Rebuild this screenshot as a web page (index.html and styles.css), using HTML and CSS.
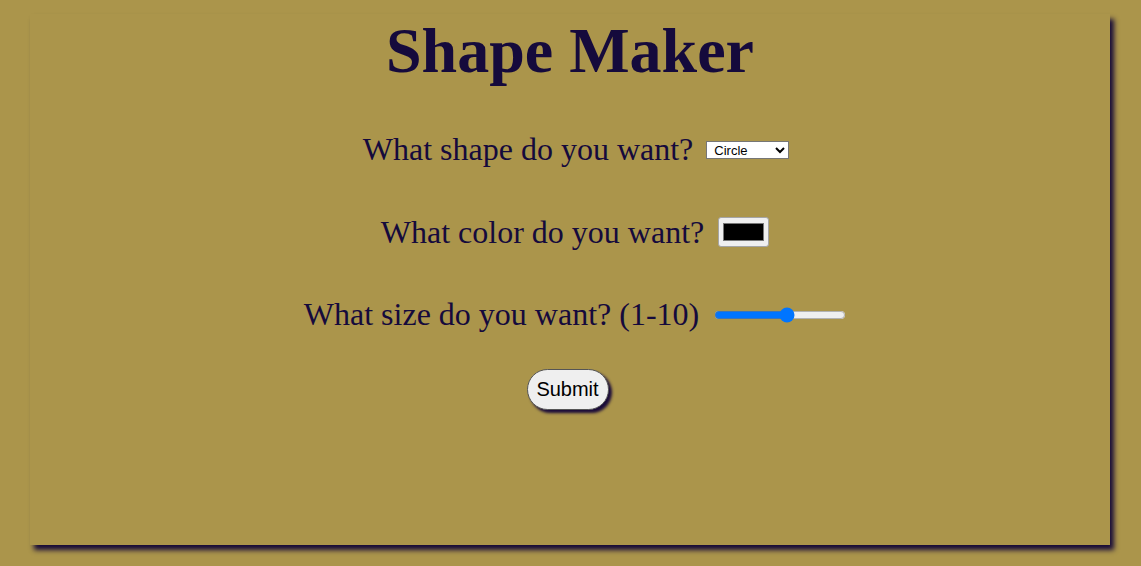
FILE: index.html
```html
<!DOCTYPE html>
<html lang="en">
<head>
<meta charset="utf-8">
<title>Shape Maker</title>
<link rel="stylesheet" href="styles.css">
</head>
<body>
<main class="app">
  <h1 class="title">Shape Maker</h1>
  <form class="form">
    <div class="row row-shape">
      <label class="label" for="shape">What shape do you want?</label>
      <select class="select" id="shape">
        <option>Circle</option>
        <option>Square</option>
        <option>Triangle</option>
      </select>
    </div>
    <div class="row">
      <label class="label" for="color">What color do you want?</label>
      <input class="color" id="color" type="color" value="#000000">
    </div>
    <div class="row">
      <label class="label" for="size">What size do you want? (1-10)</label>
      <input class="range" id="size" type="range" min="1" max="10" value="6">
    </div>
    <div class="actions">
      <button class="submit" type="button">Submit</button>
    </div>
  </form>
</main>
</body>
</html>
```

FILE: styles.css
```css
html, body {
  margin: 0;
  padding: 0;
  background: #ab954b;
}

body {
  padding: 14px 31px 21px 30px;
  font-family: "Liberation Serif", "Times New Roman", serif;
  color: #150a3c;
}

.app {
  height: 531px;
  background: #ab954b;
  box-shadow: 4px 5px 5px #160a38;
  display: flex;
  flex-direction: column;
  align-items: center;
}

.title {
  margin: 0;
  font-size: 64px;
  font-weight: bold;
  line-height: 74px;
  text-align: center;
}

.form {
  margin-top: 43px;
  display: flex;
  flex-direction: column;
  align-items: center;
  gap: 45.5px;
  width: 100%;
}

.row {
  display: flex;
  align-items: center;
  justify-content: center;
  height: 37px;
  padding-left: 10px;
}

.row-shape {
  padding-left: 12px;
}

.label {
  font-size: 32px;
  line-height: 37px;
  margin-right: 13px;
}

.select {
  width: 83px;
  height: 18px;
  margin: 0;
  font-family: "Liberation Sans", Arial, sans-serif;
  font-size: 13px;
  color: #000;
  background: #fff;
  border: 1px solid #767676;
  border-radius: 0;
  padding: 0 0 0 3px;
}

.color {
  width: 51px;
  height: 30px;
  margin: 0 0 0 1px;
  padding: 5px 4px;
  box-sizing: border-box;
  background: #efefef;
  border: 1px solid #a5a5a5;
  border-radius: 3px;
}

.color::-webkit-color-swatch-wrapper {
  padding: 0;
}

.color::-webkit-color-swatch {
  border: 1px solid #777;
  border-radius: 0;
}

.range {
  width: 132px;
  margin: 0 0 0 2px;
  accent-color: #0075ff;
}

.actions {
  margin-top: -9.5px;
  display: flex;
  justify-content: center;
}

.submit {
  width: 82px;
  height: 41px;
  margin-right: 5px;
  box-sizing: border-box;
  font-family: "Liberation Sans", Arial, sans-serif;
  font-size: 20px;
  color: #000;
  background: #efefef;
  border: 1.5px solid #555;
  border-radius: 21px;
  box-shadow: 3px 3px 3px #1a0b3a;
  padding: 0;
}
```
